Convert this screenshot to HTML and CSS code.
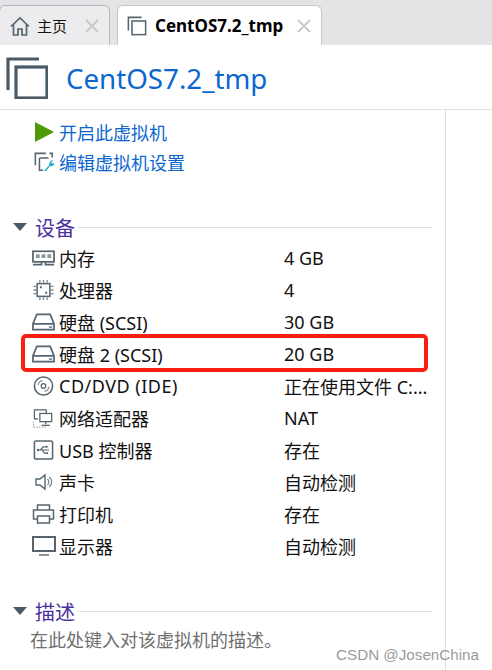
FILE: index.html
```html
<!DOCTYPE html>
<html lang="zh-CN">
<head>
<meta charset="utf-8">
<title>CentOS7.2_tmp</title>
<link rel="stylesheet" href="styles.css">
</head>
<body>
<div class="page">
  <nav class="tabs">
    <div class="tab tab-home">
      <svg class="tab-icon" viewBox="0 0 20 20"><path d="M1 10.500 10 2l9 8.500M3.500 8.500V19h4.500v-6h4v6h4.500V8.500" fill="none" stroke="#56656f" stroke-width="1.700"/></svg>
      <span class="tab-label">主页</span>
      <svg class="tab-close" viewBox="0 0 14 14"><path d="M1 1l12 12M13 1 1 13" stroke="#c8c8c8" stroke-width="1.800"/></svg>
    </div>
    <div class="tab tab-active">
      <svg class="tab-icon" viewBox="0 0 22 22"><path d="M16 1.500H1.500V16" fill="none" stroke="#56656f" stroke-width="1.700"/><rect x="5.500" y="5.500" width="15" height="15" fill="none" stroke="#56656f" stroke-width="1.700"/></svg>
      <span class="tab-label tab-label-bold">CentOS7.2_tmp</span>
      <svg class="tab-close" viewBox="0 0 14 14"><path d="M1 1l12 12M13 1 1 13" stroke="#c8c8c8" stroke-width="1.800"/></svg>
    </div>
  </nav>

  <header class="head">
    <svg class="head-icon" viewBox="0 0 42 42"><path d="M33 2H2v31" fill="none" stroke="#4a5a66" stroke-width="3.200"/><rect x="10" y="10" width="31" height="31" fill="none" stroke="#4a5a66" stroke-width="3.200"/></svg>
    <h1 class="title">CentOS7.2_tmp</h1>
  </header>

  <main class="main">
    <div class="content">
      <div class="actions">
        <a class="action">
          <svg class="action-icon" viewBox="0 0 20 20"><path d="M1 0l19 10L1 20z" fill="#4e9a06"/></svg>
          <span>开启此虚拟机</span>
        </a>
        <a class="action">
          <svg class="action-icon" viewBox="0 0 22 22"><path d="M13 1.500H1.500v13M20 6V1.500h-3" fill="none" stroke="#56656f" stroke-width="1.700"/><path d="M6 6.500h10M6 6.500V20h4" fill="none" stroke="#56656f" stroke-width="1.700"/><path d="M11 21l6-7a4 4 0 0 1 4-5l-2 2.500 1.500 1.500 2-1.500a4 4 0 0 1-5 4l-4 5.500z" fill="#1fa8d0"/></svg>
          <span>编辑虚拟机设置</span>
        </a>
      </div>

      <section class="section section-devices">
        <div class="section-head">
          <svg class="caret" viewBox="0 0 14 8"><path d="M0 0h14L7 8z" fill="#4a5a66"/></svg>
          <h2 class="section-title">设备</h2>
          <span class="rule"></span>
        </div>
        <ul class="devices">
          <li class="device">
            <span class="device-name"><svg class="device-icon" viewBox="0 0 24 16"><rect x="1" y="1" width="22" height="11" fill="none" stroke="#56656f" stroke-width="1.800"/><path d="M4 4h4v4H4zM10 4h4v4h-4zM16 4h4v4h-4z" fill="#8b969e"/><path d="M1 15h9v-3M23 15h-9v-3" fill="none" stroke="#56656f" stroke-width="1.800"/></svg><span>内存</span></span>
            <span class="device-value">4 GB</span>
          </li>
          <li class="device">
            <span class="device-name"><svg class="device-icon" viewBox="0 0 22 22"><rect x="4" y="4" width="14" height="14" fill="none" stroke="#56656f" stroke-width="1.700"/><path d="M7 0v3M11 0v3M15 0v3M7 19v3M11 19v3M15 19v3M0 7h3M0 11h3M0 15h3M19 7h3M19 11h3M19 15h3" stroke="#76838c" stroke-width="1.400"/><path d="M7 7h2v2H7zM13 13h2v2h-2z" fill="#4a5a66"/></svg><span>处理器</span></span>
            <span class="device-value">4</span>
          </li>
          <li class="device">
            <span class="device-name"><svg class="device-icon" viewBox="0 0 24 18"><path d="M1 11 5 1h14l4 10v6H1z M1 11h22" fill="none" stroke="#56656f" stroke-width="1.800"/><path d="M18 13.500h3v1.500h-3z" fill="#56656f"/></svg><span>硬盘 (SCSI)</span></span>
            <span class="device-value">30 GB</span>
          </li>
          <li class="device">
            <span class="device-name"><svg class="device-icon" viewBox="0 0 24 18"><path d="M1 11 5 1h14l4 10v6H1z M1 11h22" fill="none" stroke="#56656f" stroke-width="1.800"/><path d="M18 13.500h3v1.500h-3z" fill="#56656f"/></svg><span>硬盘 2 (SCSI)</span></span>
            <span class="device-value">20 GB</span>
          </li>
          <li class="device">
            <span class="device-name"><svg class="device-icon" viewBox="0 0 22 22"><circle cx="11" cy="11" r="10" fill="none" stroke="#56656f" stroke-width="1.700"/><circle cx="11" cy="11" r="2.500" fill="none" stroke="#56656f" stroke-width="1.400"/><path d="M5 10a6 6 0 0 1 5-5M17 12a6 6 0 0 1-5 5" fill="none" stroke="#8b969e" stroke-width="1.400"/></svg><span class="latin">CD/DVD (IDE)</span></span>
            <span class="device-value">正在使用文件 C:...</span>
          </li>
          <li class="device">
            <span class="device-name"><svg class="device-icon" viewBox="0 0 24 22"><path d="M6 12H2V2h13v4" fill="none" stroke="#56656f" stroke-width="1.400"/><rect x="8" y="6" width="13" height="9" fill="none" stroke="#56656f" stroke-width="1.400"/><path d="M14.500 15v3M10 19h9" stroke="#56656f" stroke-width="1.400"/><path d="M1 21h14M1 15v6" stroke="#9aa4ab" stroke-width="1.200" stroke-dasharray="1.500 1.500"/></svg><span>网络适配器</span></span>
            <span class="device-value">NAT</span>
          </li>
          <li class="device">
            <span class="device-name"><svg class="device-icon" viewBox="0 0 22 22"><rect x="1" y="1" width="20" height="20" rx="2" fill="none" stroke="#56656f" stroke-width="1.700"/><path d="M4.500 11h12.500M7.500 11l3-3.500h3M9.500 11l2.500 3.500h2" fill="none" stroke="#56656f" stroke-width="1.300"/><path d="M13.500 6.300h2v2.200h-2zM14 13.500h2v2h-2z" fill="#56656f"/><circle cx="5" cy="11" r="1.300" fill="#56656f"/></svg><span>USB 控制器</span></span>
            <span class="device-value">存在</span>
          </li>
          <li class="device">
            <span class="device-name"><svg class="device-icon device-icon-small" viewBox="0 0 18 18"><path d="M1 6h4l5-4v14l-5-4H1z" fill="none" stroke="#56656f" stroke-width="1.400"/><path d="M12.500 6a4 4 0 0 1 0 6M14.500 4a7 7 0 0 1 0 10" fill="none" stroke="#76838c" stroke-width="1.200"/></svg><span>声卡</span></span>
            <span class="device-value">自动检测</span>
          </li>
          <li class="device">
            <span class="device-name"><svg class="device-icon" viewBox="0 0 22 20"><path d="M5 6V1h12v5M5 15H1V6h20v9h-4" fill="none" stroke="#56656f" stroke-width="1.500"/><rect x="5" y="12" width="12" height="7" fill="none" stroke="#56656f" stroke-width="1.500"/></svg><span>打印机</span></span>
            <span class="device-value">存在</span>
          </li>
          <li class="device">
            <span class="device-name"><svg class="device-icon device-icon-wide" viewBox="0 0 24 20"><rect x="1" y="1" width="22" height="14" fill="none" stroke="#56656f" stroke-width="2"/><path d="M7 18h10v2H7z" fill="#8b969e"/></svg><span>显示器</span></span>
            <span class="device-value">自动检测</span>
          </li>
        </ul>
      </section>

      <section class="section section-desc">
        <div class="section-head">
          <svg class="caret" viewBox="0 0 14 8"><path d="M0 0h14L7 8z" fill="#4a5a66"/></svg>
          <h2 class="section-title">描述</h2>
          <span class="rule"></span>
        </div>
        <p class="desc">在此处键入对该虚拟机的描述。</p>
      </section>
    </div>
    <aside class="side"></aside>
  </main>

  <div class="highlight"></div>
  <div class="watermark">CSDN @JosenChina</div>
</div>
</body>
</html>
```

FILE: styles.css
```css
* { box-sizing: border-box; }
html, body { margin: 0; padding: 0; }
body {
  background: #fff;
  font-family: "Noto Sans", "Noto Sans CJK SC", sans-serif;
  font-size: 18px;
  color: #111;
}
.page {
  position: relative;
  width: 492px;
  height: 670px;
  overflow: hidden;
}
.tabs {
  display: flex;
  align-items: flex-end;
  gap: 7px;
  height: 45px;
  background: #e4e4e6;
}
.tab {
  display: flex;
  align-items: center;
  height: 40px;
  border: 1px solid #b4b8bb;
  border-bottom: 0;
  border-radius: 6px 6px 0 0;
}
.tab-home {
  width: 111px;
  margin-left: -1px;
  padding: 0 10px;
  background: #ececee;
}
.tab-active {
  width: 205px;
  padding: 0 10px 0 9px;
  background: #fff;
  border-color: #c4c7c9;
}
.tab-icon { width: 20px; height: 20px; flex: none; }
.tab-label {
  flex: 1;
  margin-left: 7px;
  font-size: 15px;
  line-height: 20px;
}
.tab-label-bold {
  margin-left: 8px;
  font-size: 17px;
  font-weight: 700;
  white-space: nowrap;
  color: #000;
}
.tab-close { width: 14px; height: 14px; flex: none; }
.head {
  display: flex;
  align-items: center;
  height: 65px;
  padding: 1px 0 0 6px;
  border-bottom: 1px solid #e2e2e2;
}
.head-icon { width: 42px; height: 42px; flex: none; }
.title {
  margin: 0 0 0 18px;
  font-size: 27.700px;
  font-weight: 400;
  line-height: 32px;
  color: #0b67cf;
  white-space: nowrap;
}
.main {
  display: flex;
  height: 560px;
}
.content {
  width: 445px;
  padding: 10px 13px 0 0;
}
.side {
  width: 47px;
  border-left: 1px solid #dedede;
}
.actions {
  display: flex;
  flex-direction: column;
  gap: 6px;
}
.action {
  display: flex;
  align-items: center;
  height: 24px;
  padding-left: 34px;
  gap: 5px;
  color: #0b67cf;
  white-space: nowrap;
}
.action-icon { width: 20px; height: 20px; flex: none; }
.section-devices { margin-top: 41px; }
.section-head {
  display: flex;
  align-items: center;
  height: 24px;
  padding-left: 13px;
}
.caret { width: 14px; height: 8px; flex: none; }
.section-title {
  margin: 0 0 0 8px;
  padding-top: 3px;
  font-size: 20px;
  font-weight: 400;
  line-height: 24px;
  color: #4b2ea0;
}
.rule {
  flex: 1;
  height: 1px;
  margin-left: 3px;
  background: #dedede;
}
.devices {
  list-style: none;
  margin: 3px 0 0;
  padding: 0;
}
.device {
  display: flex;
  align-items: center;
  height: 32px;
  white-space: nowrap;
}
.device-name {
  display: flex;
  align-items: center;
  width: 284px;
  padding-left: 32px;
}
.latin { letter-spacing: 0.5px; }
.device-icon {
  width: 23px;
  height: 20px;
  margin-right: 4px;
  flex: none;
}
.device-icon-small { width: 18px; height: 18px; margin-left: 3px; margin-right: 6px; }
.device-icon-wide { width: 24px; height: 20px; margin-right: 3px; }
.device-value { flex: none; }
.section-desc { margin-top: 37px; }
.desc {
  margin: 5px 0 0 30px;
  font-size: 18px;
  line-height: 24px;
  color: #6f6f6f;
  white-space: nowrap;
}
.highlight {
  position: absolute;
  left: 21px;
  top: 334px;
  width: 407px;
  height: 38px;
  border: 4px solid #fb1e12;
  border-radius: 5px;
}
.watermark {
  position: absolute;
  right: 13px;
  top: 645px;
  font-family: "Liberation Sans", sans-serif;
  font-size: 15.200px;
  line-height: 20px;
  color: #9b9b9b;
}
```
